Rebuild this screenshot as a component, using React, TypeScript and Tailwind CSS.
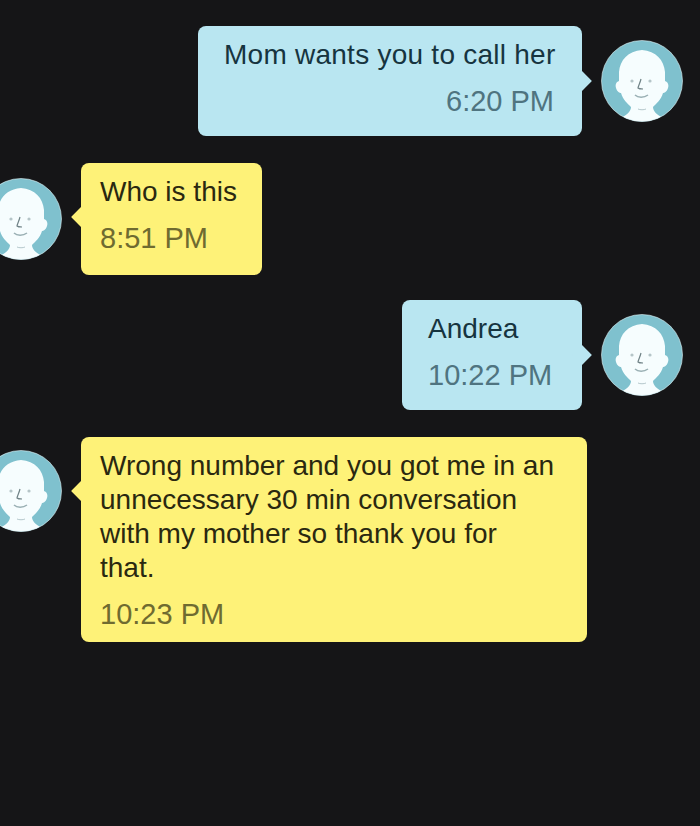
const Avatar = () => (
  <svg width="82" height="82" viewBox="0 0 82 82" className="shrink-0">
    <defs>
      <clipPath id="c"><circle cx="41" cy="41" r="40.5" /></clipPath>
    </defs>
    <g clipPath="url(#c)">
      <rect width="82" height="82" fill="#7fc1ce" />
      <path
        d="M41 10C27 11 19 20 18 32C18 36 18 38 18 41C15 42 14 45 15 48C16 52 19 53 20 53C22 60 27 64 30 67C30 71 26 75 20 78L20 84L62 84L62 78C56 75 52 71 52 67C55 64 60 60 62 53C63 53 66 52 67 48C68 45 67 42 64 41C64 38 64 36 64 32C63 20 55 11 41 10Z"
        fill="#f6fdfe"
      />
    </g>
    <circle cx="41" cy="41" r="40.500" fill="none" stroke="#dff3f6" strokeWidth="1" opacity="0.6" />
    <circle cx="31" cy="41" r="1.600" fill="#b5c5c8" />
    <circle cx="49" cy="41" r="1.600" fill="#b5c5c8" />
    <path d="M40 39C39 43 37 47 37 48C38 49 40 49 42 49" fill="none" stroke="#6f8286" strokeWidth="1.200" />
    <path d="M34 55C37 58 43 58 47 55" fill="none" stroke="#9ab0b4" strokeWidth="1.500" />
    <path d="M37 69C39 70 43 70 45 69" fill="none" stroke="#b5c8cc" strokeWidth="1" />
  </svg>
);

const Bubble = ({ text, time, side, w, h, right, tail, track }: { text: string[]; time: string; side: "l" | "r"; w: string; h: string; right?: boolean; tail: string; track?: string }) => {
  const isR = side === "r";
  return (
    <div className={`relative rounded-[8px] ${w} ${h} ${isR ? "bg-[#b9e6f1] pl-[26px] pr-[28px]" : "bg-[#fef278] pl-[19px] pr-[20px]"} pt-[12px]`}>
      <div
        className={`absolute h-[14px] w-[14px] rotate-45 ${tail} ${isR ? "-right-[7px] bg-[#b9e6f1]" : "-left-[7px] bg-[#fef278]"}`}
      />
      <div className={`relative text-[28px] leading-[34px] ${track ?? ""} ${isR ? "text-[#16343f]" : "text-[#2a2810]"}`}>
        {text.map((t) => (
          <div key={t} className="whitespace-nowrap">{t}</div>
        ))}
      </div>
      <div className={`relative mt-[12px] text-[29px] leading-[35px] ${right ? "text-right" : ""} ${isR ? "text-[#4f7480]" : "text-[#6f6b30]"}`}>
        {time}
      </div>
    </div>
  );
};

export default function App() {
  return (
    <div className="h-[826px] w-[700px] overflow-hidden bg-[#151517] pt-[26px] [font-family:'Liberation_Sans',sans-serif]">
      <div className="flex items-center justify-end gap-[19px] pr-[17px]">
        <Bubble side="r" w="w-[384px]" h="h-[110px]" text={["Mom wants you to call her"]} time="6:20 PM" right tail="top-[48px]" track="tracking-[0.25px]" />
        <Avatar />
      </div>
      <div className="ml-[-20px] mt-[27px] flex items-center gap-[19px]">
        <Avatar />
        <Bubble side="l" w="w-[181px]" h="h-[112px]" text={["Who is this"]} time="8:51 PM" tail="top-[47px]" />
      </div>
      <div className="mt-[25px] flex items-center justify-end gap-[19px] pr-[17px]">
        <Bubble side="r" w="w-[180px]" h="h-[110px]" text={["Andrea"]} time="10:22 PM" tail="top-[48px]" />
        <Avatar />
      </div>
      <div className="ml-[-20px] mt-[27px] flex items-start gap-[19px]">
        <div className="mt-[13px]"><Avatar /></div>
        <Bubble
          side="l"
          w="w-[506px]"
          h="h-[205px]"
          text={["Wrong number and you got me in an", "unnecessary 30 min conversation", "with my mother so thank you for", "that."]}
          time="10:23 PM"
          tail="top-[47px]"
        />
      </div>
    </div>
  );
}
